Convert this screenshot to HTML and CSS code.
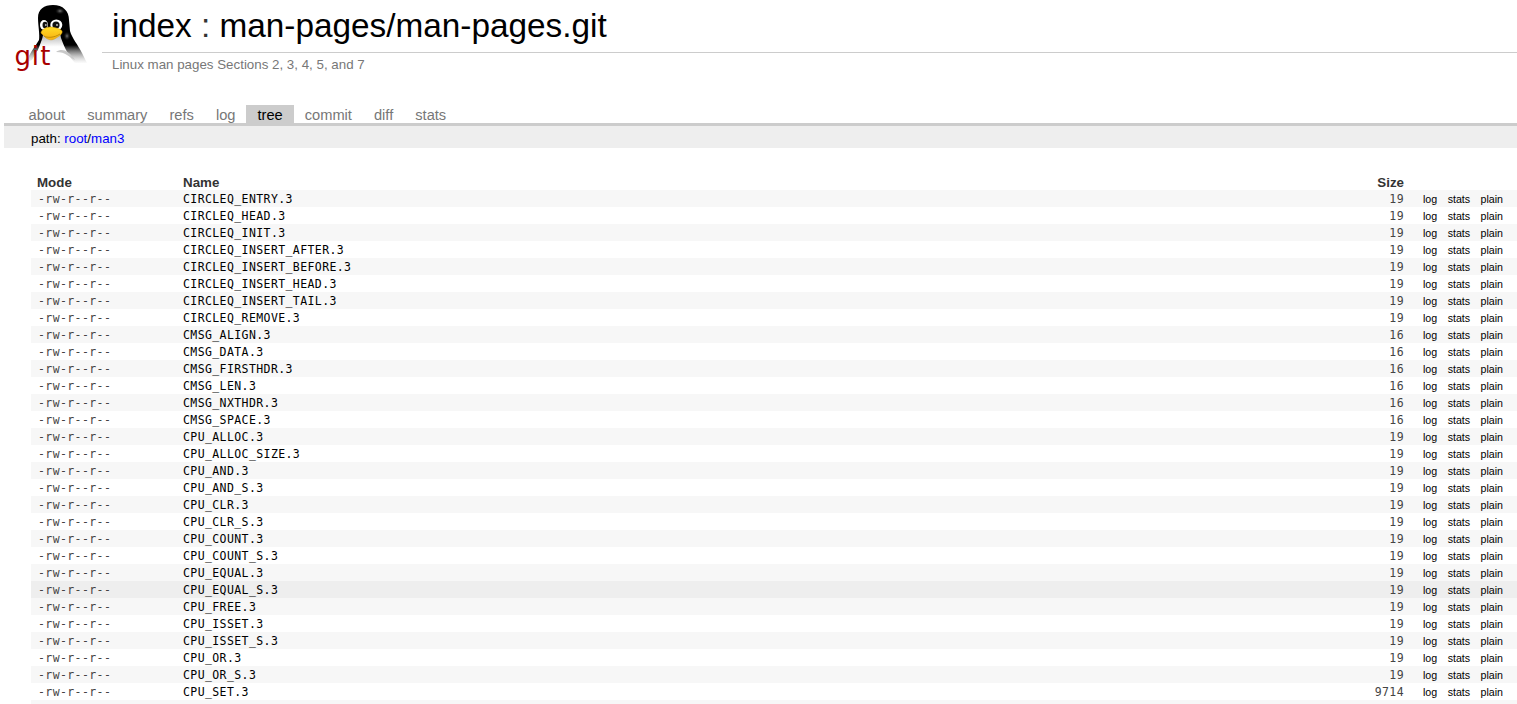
FILE: index.html
```html
<!DOCTYPE html>
<html lang="en">
<head>
<meta charset="utf-8">
<title>index : man-pages/man-pages.git</title>
<link rel="stylesheet" href="styles.css">
</head>
<body>
<header class="header">
<svg class="logo" viewBox="0 0 102 76" width="102" height="76">
<defs>
<linearGradient id="coat" gradientUnits="userSpaceOnUse" x1="0" y1="5" x2="0" y2="64"><stop offset="0"/><stop offset=".68" stop-color="#000"/><stop offset="1" stop-color="#bbb" stop-opacity="0"/></linearGradient>
<linearGradient id="belly" gradientUnits="userSpaceOnUse" x1="0" y1="36" x2="0" y2="54"><stop offset="0" stop-color="#bbb"/><stop offset=".6" stop-color="#fff"/></linearGradient>
<linearGradient id="beak" x1="0" y1="0" x2="0" y2="1"><stop offset="0" stop-color="#ffdc28"/><stop offset="1" stop-color="#f8b010"/></linearGradient>
<radialGradient id="shine"><stop offset="0" stop-color="#777"/><stop offset="1" stop-color="#111" stop-opacity="0"/></radialGradient>
</defs>
<path fill="url(#coat)" d="M38 18C38 9 44 5 53 5C63 5 69 11 69 20L70 31C72 38 78 45 82 53L87 63H68L60 51H37L32 60L27 62C29 53 35 47 39 40C40 35 38 25 38 18Z"/>
<path fill="url(#belly)" d="M43 35C42 42 37 50 33 64H76C69 57 65 49 61 38L60 33Z"/>
<path fill="#c8c8c8" d="M56 52C62 48 68 50 75 60C69 57 66 52 56 52Z"/>
<ellipse cx="60" cy="11" rx="5" ry="3.5" fill="url(#shine)"/><ellipse cx="67" cy="36" rx="3.5" ry="4.5" fill="url(#shine)"/>
<ellipse cx="44" cy="25" rx="4" ry="5" fill="#fff"/><ellipse cx="56.3" cy="25" rx="6" ry="5.5" fill="#fff"/>
<ellipse cx="45" cy="25" rx="2.5" ry="3.2" fill="#111"/><ellipse cx="56" cy="25" rx="3.6" ry="3.6" fill="#111"/>
<circle cx="45.8" cy="25" r=".9" fill="#bbb"/><circle cx="57" cy="25" r="1" fill="#bbb"/>
<path fill="url(#beak)" stroke="#d69b00" stroke-width=".5" d="M41 33C41 30 46 27 50 27C54 27 61 29 62 31C63 34 59 36 56 38C52 41 48 40 45 37Z"/>
<path fill="none" stroke="#a87800" stroke-width=".7" d="M44 36C47 38 54 38 60 34"/>
<text class="logo-text" x="14.5 31.8 40.3" y="65">git</text>
</svg>
<div class="heading">
<h1 class="title"><a>index</a> : <a>man-pages/man-pages.git</a></h1>
<p class="subtitle">Linux man pages Sections 2, 3, 4, 5, and 7</p>
</div>
</header>
<nav class="tabs"><a>about</a><a>summary</a><a>refs</a><a>log</a><a class="active">tree</a><a>commit</a><a>diff</a><a>stats</a></nav>
<div class="path">path: <a>root</a>/<a>man3</a></div>
<main class="content">
<table class="list">
<colgroup><col class="col-mode"><col class="col-name"><col class="col-size"><col class="col-links"></colgroup>
<thead><tr><th>Mode</th><th>Name</th><th class="size">Size</th><th></th></tr></thead>
<tbody>
<tr><td class="mode">-rw-r--r--</td><td class="name">CIRCLEQ_ENTRY.3</td><td class="size">19</td><td class="links"><a>log</a><a>stats</a><a>plain</a></td></tr>
<tr><td class="mode">-rw-r--r--</td><td class="name">CIRCLEQ_HEAD.3</td><td class="size">19</td><td class="links"><a>log</a><a>stats</a><a>plain</a></td></tr>
<tr><td class="mode">-rw-r--r--</td><td class="name">CIRCLEQ_INIT.3</td><td class="size">19</td><td class="links"><a>log</a><a>stats</a><a>plain</a></td></tr>
<tr><td class="mode">-rw-r--r--</td><td class="name">CIRCLEQ_INSERT_AFTER.3</td><td class="size">19</td><td class="links"><a>log</a><a>stats</a><a>plain</a></td></tr>
<tr><td class="mode">-rw-r--r--</td><td class="name">CIRCLEQ_INSERT_BEFORE.3</td><td class="size">19</td><td class="links"><a>log</a><a>stats</a><a>plain</a></td></tr>
<tr><td class="mode">-rw-r--r--</td><td class="name">CIRCLEQ_INSERT_HEAD.3</td><td class="size">19</td><td class="links"><a>log</a><a>stats</a><a>plain</a></td></tr>
<tr><td class="mode">-rw-r--r--</td><td class="name">CIRCLEQ_INSERT_TAIL.3</td><td class="size">19</td><td class="links"><a>log</a><a>stats</a><a>plain</a></td></tr>
<tr><td class="mode">-rw-r--r--</td><td class="name">CIRCLEQ_REMOVE.3</td><td class="size">19</td><td class="links"><a>log</a><a>stats</a><a>plain</a></td></tr>
<tr><td class="mode">-rw-r--r--</td><td class="name">CMSG_ALIGN.3</td><td class="size">16</td><td class="links"><a>log</a><a>stats</a><a>plain</a></td></tr>
<tr><td class="mode">-rw-r--r--</td><td class="name">CMSG_DATA.3</td><td class="size">16</td><td class="links"><a>log</a><a>stats</a><a>plain</a></td></tr>
<tr><td class="mode">-rw-r--r--</td><td class="name">CMSG_FIRSTHDR.3</td><td class="size">16</td><td class="links"><a>log</a><a>stats</a><a>plain</a></td></tr>
<tr><td class="mode">-rw-r--r--</td><td class="name">CMSG_LEN.3</td><td class="size">16</td><td class="links"><a>log</a><a>stats</a><a>plain</a></td></tr>
<tr><td class="mode">-rw-r--r--</td><td class="name">CMSG_NXTHDR.3</td><td class="size">16</td><td class="links"><a>log</a><a>stats</a><a>plain</a></td></tr>
<tr><td class="mode">-rw-r--r--</td><td class="name">CMSG_SPACE.3</td><td class="size">16</td><td class="links"><a>log</a><a>stats</a><a>plain</a></td></tr>
<tr><td class="mode">-rw-r--r--</td><td class="name">CPU_ALLOC.3</td><td class="size">19</td><td class="links"><a>log</a><a>stats</a><a>plain</a></td></tr>
<tr><td class="mode">-rw-r--r--</td><td class="name">CPU_ALLOC_SIZE.3</td><td class="size">19</td><td class="links"><a>log</a><a>stats</a><a>plain</a></td></tr>
<tr><td class="mode">-rw-r--r--</td><td class="name">CPU_AND.3</td><td class="size">19</td><td class="links"><a>log</a><a>stats</a><a>plain</a></td></tr>
<tr><td class="mode">-rw-r--r--</td><td class="name">CPU_AND_S.3</td><td class="size">19</td><td class="links"><a>log</a><a>stats</a><a>plain</a></td></tr>
<tr><td class="mode">-rw-r--r--</td><td class="name">CPU_CLR.3</td><td class="size">19</td><td class="links"><a>log</a><a>stats</a><a>plain</a></td></tr>
<tr><td class="mode">-rw-r--r--</td><td class="name">CPU_CLR_S.3</td><td class="size">19</td><td class="links"><a>log</a><a>stats</a><a>plain</a></td></tr>
<tr><td class="mode">-rw-r--r--</td><td class="name">CPU_COUNT.3</td><td class="size">19</td><td class="links"><a>log</a><a>stats</a><a>plain</a></td></tr>
<tr><td class="mode">-rw-r--r--</td><td class="name">CPU_COUNT_S.3</td><td class="size">19</td><td class="links"><a>log</a><a>stats</a><a>plain</a></td></tr>
<tr><td class="mode">-rw-r--r--</td><td class="name">CPU_EQUAL.3</td><td class="size">19</td><td class="links"><a>log</a><a>stats</a><a>plain</a></td></tr>
<tr class="hovered"><td class="mode">-rw-r--r--</td><td class="name">CPU_EQUAL_S.3</td><td class="size">19</td><td class="links"><a>log</a><a>stats</a><a>plain</a></td></tr>
<tr><td class="mode">-rw-r--r--</td><td class="name">CPU_FREE.3</td><td class="size">19</td><td class="links"><a>log</a><a>stats</a><a>plain</a></td></tr>
<tr><td class="mode">-rw-r--r--</td><td class="name">CPU_ISSET.3</td><td class="size">19</td><td class="links"><a>log</a><a>stats</a><a>plain</a></td></tr>
<tr><td class="mode">-rw-r--r--</td><td class="name">CPU_ISSET_S.3</td><td class="size">19</td><td class="links"><a>log</a><a>stats</a><a>plain</a></td></tr>
<tr><td class="mode">-rw-r--r--</td><td class="name">CPU_OR.3</td><td class="size">19</td><td class="links"><a>log</a><a>stats</a><a>plain</a></td></tr>
<tr><td class="mode">-rw-r--r--</td><td class="name">CPU_OR_S.3</td><td class="size">19</td><td class="links"><a>log</a><a>stats</a><a>plain</a></td></tr>
<tr><td class="mode">-rw-r--r--</td><td class="name">CPU_SET.3</td><td class="size">9714</td><td class="links"><a>log</a><a>stats</a><a>plain</a></td></tr>
<tr><td></td><td></td><td></td><td></td></tr>
</tbody>
</table>
</main>
</body>
</html>
```
FILE: styles.css
```css
body {
  margin: 0;
  height: 704px;
  overflow: hidden;
  background: #fff;
  color: #333;
  font: 13.33px/15px "Liberation Sans", Arial, sans-serif;
}
.header { display: flex; height: 105px; }
.logo { flex: none; }
.logo-text { font: 26px "DejaVu Sans", sans-serif; fill: #a80000; }
.heading { flex: 1; }
.title {
  margin: 0;
  height: 53px;
  padding-left: 10px;
  box-sizing: border-box;
  border-bottom: 1px solid #ccc;
  font-size: 33.35px;
  line-height: 52px;
  font-weight: 400;
  white-space: nowrap;
}
.title a { color: #000; }
.subtitle { margin: 4px 0 0 10px; color: #777; }
.tabs {
  display: flex;
  height: 18px;
  margin-left: 4px;
  padding-left: 13.5px;
  border-bottom: 3px solid #ccc;
  font-size: 14.67px;
  line-height: 20px;
  color: #777;
}
.tabs a { padding: 0 11px; }
.tabs .active { background: #ccc; color: #000; }
.path {
  height: 22px;
  margin-left: 4px;
  padding-left: 27px;
  background: #eee;
  color: #000;
  line-height: 25px;
}
.path a { color: #00f; }
.content { padding: 26px 0 0 31px; }
.list { width: 100%; border-collapse: collapse; table-layout: fixed; }
.col-mode { width: 146px; }
.col-size { width: 90px; }
.col-links { width: 107px; }
.list th, .list td { padding: 0 6px; text-align: left; white-space: nowrap; }
.list th { height: 15px; padding-top: 1px; line-height: 15px; font-weight: 700; }
.list td { height: 16px; padding-top: 1px; line-height: 16px; }
.list tbody tr:nth-child(odd) { background: #f7f7f7; }
.list tbody tr.hovered { background: #eee; }
.list .mode, .list .name, .list td.size {
  height: 15px;
  padding-top: 2px;
  line-height: 15px;
  font-family: "DejaVu Sans Mono", monospace;
  font-size: 11.5px;
  letter-spacing: .4px;
}
.list .name { color: #000; }
.list .mode, .list td.size { color: #444; }
.list .mode { padding-left: 7px; }
.list .size, .list td.size { text-align: right; }
.list .links { padding: 1px 0 0 13px; color: #000; font-size: 10.67px; }
.links a { margin-right: 10.4px; }
```
